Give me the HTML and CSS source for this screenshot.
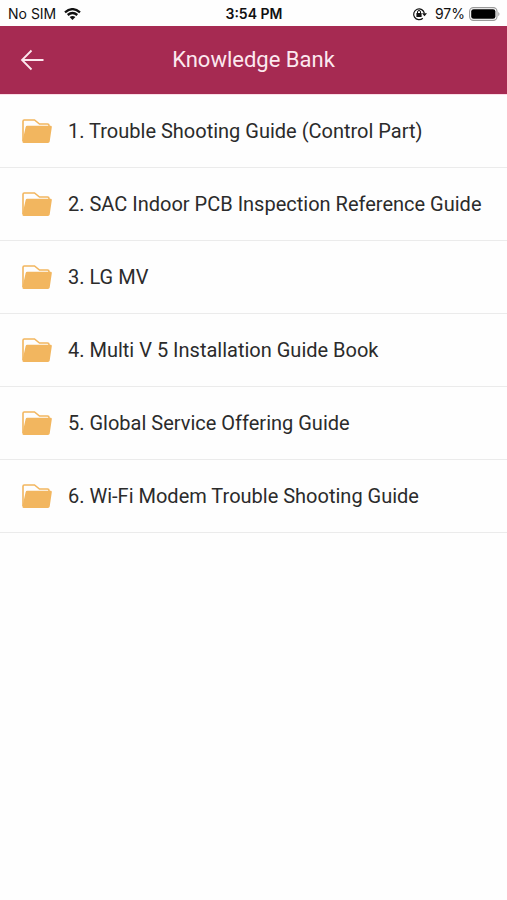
FILE: index.html
```
<!DOCTYPE html>
<html lang="en">
<head>
  <meta charset="UTF-8" />
  <meta name="viewport" content="width=device-width, initial-scale=1.0" />
  <title>Knowledge Bank</title>
  <link rel="stylesheet" href="styles.css">
</head>
<body>
  <svg class="symbols" aria-hidden="true">
    <symbol id="folder" viewBox="0 0 30 24">
      <path d="M1 22V2.2Q1 1 2.2 1H12.5L17.5 5H25.5Q27 5 27 6.5V8" fill="none" stroke="currentColor" stroke-width="1.6" />
      <path d="M5.2 6.8H28.6Q30 6.8 29.8 8.2L27.7 22.6Q27.4 24 26 24H1.6Q.2 24 .4 22.6L3.6 8.2Q3.9 6.8 5.2 6.8Z" fill="currentColor" />
    </symbol>
  </svg>

  <div class="status-bar">
    <div class="status-left">
      <span>No SIM</span>
      <svg class="wifi" viewBox="0 0 17 12" aria-hidden="true">
        <path d="M1 4.3Q8.5-2 16 4.3M3.7 7Q8.5 3 13.3 7" fill="none" stroke="currentColor" stroke-width="2.3" />
        <path d="M5.6 9Q8.5 6.8 11.4 9L8.5 12Z" fill="currentColor" />
      </svg>
    </div>
    <div class="status-time">3:54 PM</div>
    <div class="status-right">
      <svg class="rotation-lock" viewBox="0 0 15 14" aria-hidden="true">
        <path d="M10.8 11.2A5.4 5.4 0 1 1 12.4 6.4" fill="none" stroke="currentColor" stroke-width="1.2" />
        <path d="M10 6.2H15L12.5 9.2Z" fill="currentColor" />
        <rect x="4.4" y="6.1" width="5.2" height="4" rx=".5" fill="currentColor" />
        <path d="M5.5 6.3V5a1.5 1.5 0 0 1 3 0V6.3" fill="none" stroke="currentColor" />
      </svg>
      <span>97%</span>
      <svg class="battery" viewBox="0 0 31 14" aria-hidden="true">
        <rect x=".6" y=".6" width="27.4" height="12.8" rx="3.8" fill="none" stroke="#999" stroke-width="1.1" />
        <rect x="2.2" y="2.2" width="24.2" height="9.6" rx="2.4" fill="#000" />
        <path d="M29.3 4.7Q31.6 7 29.3 9.3Z" fill="#999" />
      </svg>
    </div>
  </div>

  <header class="app-bar">
    <button class="back" type="button" aria-label="Back">
      <svg viewBox="0 0 24 22" aria-hidden="true">
        <path d="M11.5 1.5L2 11L11.5 20.5M2 11H23.5" fill="none" stroke="currentColor" stroke-width="1.8" />
      </svg>
    </button>
    <h1>Knowledge Bank</h1>
  </header>

  <main>
    <ul class="folder-list">
      <li><a href="#"><svg class="folder" aria-hidden="true"><use href="#folder" /></svg><span>1. Trouble Shooting Guide (Control Part)</span></a></li>
      <li><a href="#"><svg class="folder" aria-hidden="true"><use href="#folder" /></svg><span>2. SAC Indoor PCB Inspection Reference Guide</span></a></li>
      <li><a href="#"><svg class="folder" aria-hidden="true"><use href="#folder" /></svg><span>3. LG MV</span></a></li>
      <li><a href="#"><svg class="folder" aria-hidden="true"><use href="#folder" /></svg><span>4. Multi V 5 Installation Guide Book</span></a></li>
      <li><a href="#"><svg class="folder" aria-hidden="true"><use href="#folder" /></svg><span>5. Global Service Offering Guide</span></a></li>
      <li><a href="#"><svg class="folder" aria-hidden="true"><use href="#folder" /></svg><span>6. Wi-Fi Modem Trouble Shooting Guide</span></a></li>
    </ul>
  </main>
</body>
</html>
```
FILE: styles.css
```
body {
  margin: 0;
  background: #fefefe;
  color: #2b2b2b;
  font-family: Roboto, sans-serif;
}

.symbols {
  display: none;
}

.status-bar {
  display: grid;
  grid-template-columns: 1fr auto 1fr;
  align-items: center;
  padding: 2px 7px 0 8px;
  color: #111;
  font-family: Inter, sans-serif;
  font-size: 14px;
  line-height: 24px;
}

.status-left,
.status-right {
  display: flex;
  align-items: center;
  gap: 8px;
}

.status-right {
  justify-content: flex-end;
}

.status-time {
  font-weight: 600;
}

.wifi {
  width: 17px;
  height: 12px;
}

.rotation-lock {
  width: 15px;
  height: 14px;
}

.battery {
  width: 31px;
  height: 14px;
  margin-left: -4px;
}

.app-bar {
  display: grid;
  grid-template-columns: 56px 1fr 56px;
  align-items: center;
  height: 68px;
  border-bottom: 1px solid #fbdde6;
  background: #a62a52;
  color: #fce8ef;
}

.app-bar h1 {
  grid-column: 2;
  margin: 0;
  font-size: 22px;
  font-weight: 400;
  line-height: 28px;
  text-align: center;
}

.back {
  display: flex;
  padding: 12px 12px 12px 20px;
  border: 0;
  background: none;
  color: inherit;
}

.back svg {
  width: 24px;
  height: 22px;
}

.folder-list {
  margin: 0;
  padding: 0;
  list-style: none;
}

.folder-list li {
  border-bottom: 1px solid #ebebeb;
}

.folder-list a {
  display: flex;
  align-items: center;
  gap: 16px;
  padding: 24px 22px;
  color: inherit;
  font-size: 20px;
  line-height: 24px;
  text-decoration: none;
}

.folder {
  flex: none;
  width: 30px;
  height: 24px;
  color: #f2b65f;
}
```
